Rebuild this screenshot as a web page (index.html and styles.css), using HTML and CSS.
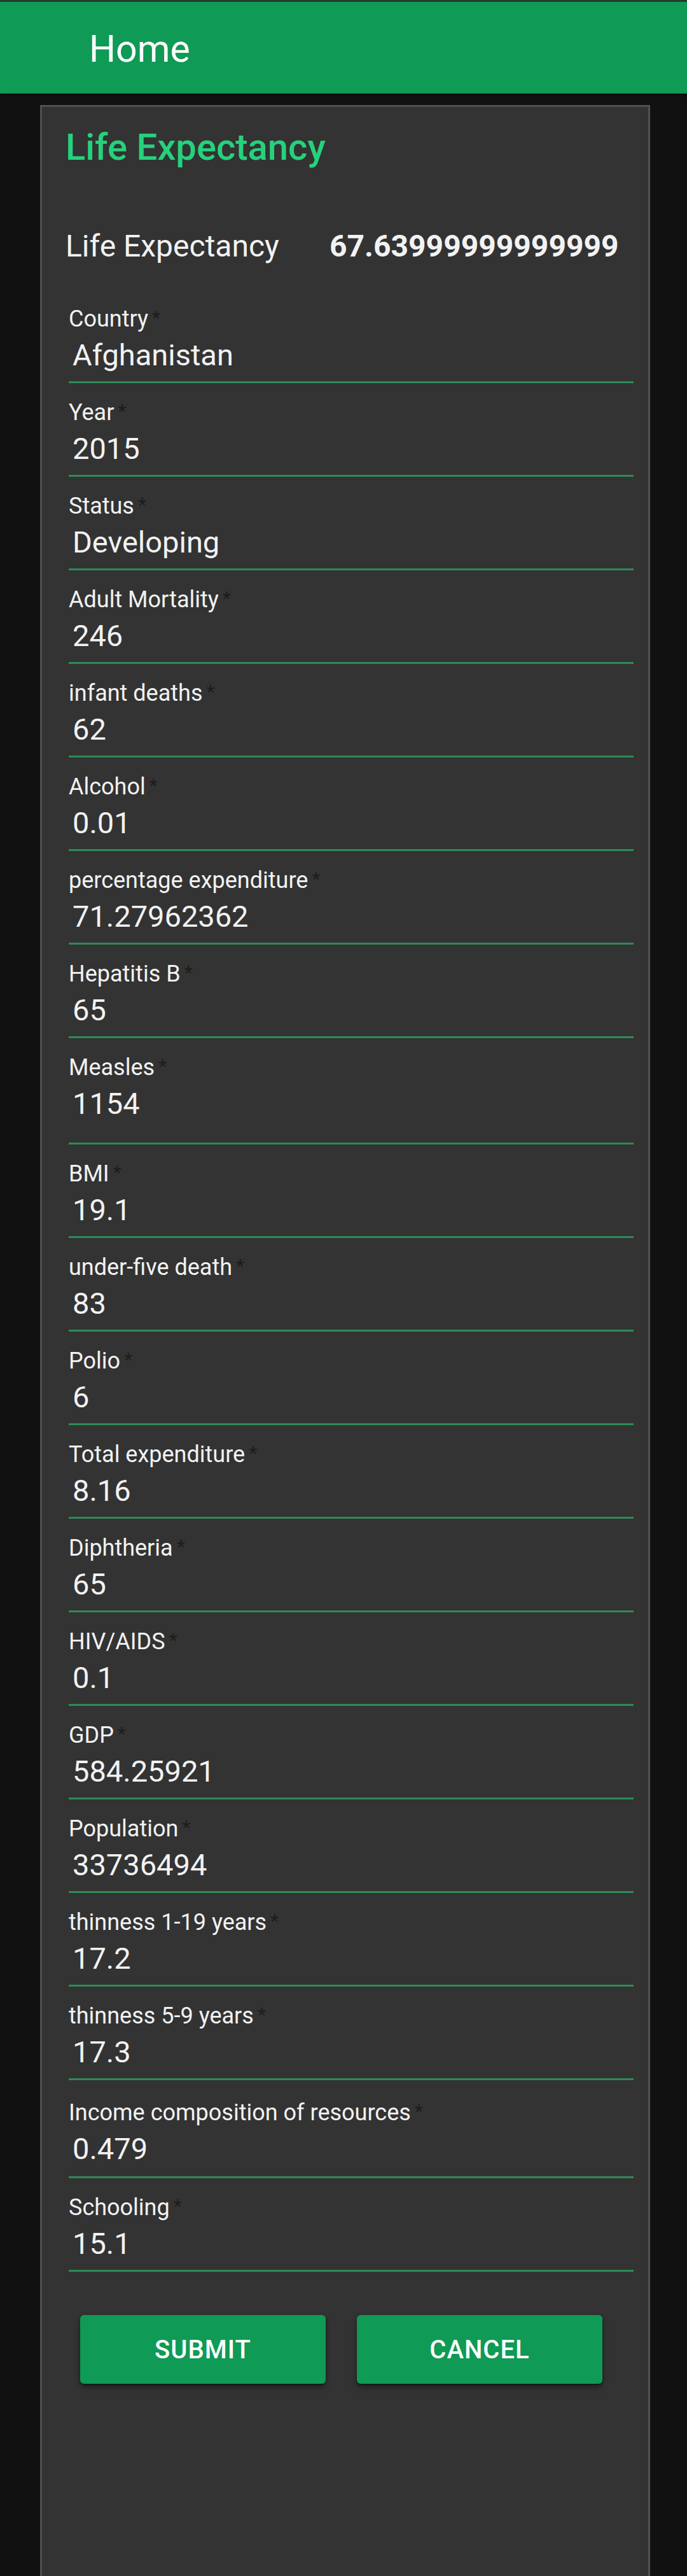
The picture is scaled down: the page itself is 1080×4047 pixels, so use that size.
FILE: index.html
```html
<!DOCTYPE html>
<html lang="en">
<head>
<meta charset="utf-8">
<title>Home</title>
<link rel="stylesheet" href="styles.css">
</head>
<body>
<header class="appbar"><div class="appbar-title">Home</div></header>
<main class="card">
  <h1 class="card-title">Life Expectancy</h1>
  <div class="result">
    <span class="result-label">Life Expectancy</span>
    <span class="result-value">67.63999999999999</span>
  </div>
  <form class="form">
    <div class="field"><label class="field-label">Country<span class="req">&thinsp;*</span></label><div class="field-value">Afghanistan</div></div>
    <div class="field"><label class="field-label">Year<span class="req">&thinsp;*</span></label><div class="field-value">2015</div></div>
    <div class="field"><label class="field-label">Status<span class="req">&thinsp;*</span></label><div class="field-value">Developing</div></div>
    <div class="field"><label class="field-label">Adult Mortality<span class="req">&thinsp;*</span></label><div class="field-value">246</div></div>
    <div class="field"><label class="field-label">infant deaths<span class="req">&thinsp;*</span></label><div class="field-value">62</div></div>
    <div class="field"><label class="field-label">Alcohol<span class="req">&thinsp;*</span></label><div class="field-value">0.01</div></div>
    <div class="field"><label class="field-label">percentage expenditure<span class="req">&thinsp;*</span></label><div class="field-value">71.27962362</div></div>
    <div class="field"><label class="field-label">Hepatitis B<span class="req">&thinsp;*</span></label><div class="field-value">65</div></div>
    <div class="field field-tall"><label class="field-label">Measles<span class="req">&thinsp;*</span></label><div class="field-value">1154</div></div>
    <div class="field"><label class="field-label">BMI<span class="req">&thinsp;*</span></label><div class="field-value">19.1</div></div>
    <div class="field"><label class="field-label">under-five death<span class="req">&thinsp;*</span></label><div class="field-value">83</div></div>
    <div class="field"><label class="field-label">Polio<span class="req">&thinsp;*</span></label><div class="field-value">6</div></div>
    <div class="field"><label class="field-label">Total expenditure<span class="req">&thinsp;*</span></label><div class="field-value">8.16</div></div>
    <div class="field"><label class="field-label">Diphtheria<span class="req">&thinsp;*</span></label><div class="field-value">65</div></div>
    <div class="field"><label class="field-label">HIV/AIDS<span class="req">&thinsp;*</span></label><div class="field-value">0.1</div></div>
    <div class="field"><label class="field-label">GDP<span class="req">&thinsp;*</span></label><div class="field-value">584.25921</div></div>
    <div class="field"><label class="field-label">Population<span class="req">&thinsp;*</span></label><div class="field-value">33736494</div></div>
    <div class="field"><label class="field-label">thinness 1-19 years<span class="req">&thinsp;*</span></label><div class="field-value">17.2</div></div>
    <div class="field"><label class="field-label">thinness 5-9 years<span class="req">&thinsp;*</span></label><div class="field-value">17.3</div></div>
    <div class="field field-income"><label class="field-label">Income composition of resources<span class="req">&thinsp;*</span></label><div class="field-value">0.479</div></div>
    <div class="field"><label class="field-label">Schooling<span class="req">&thinsp;*</span></label><div class="field-value">15.1</div></div>
    <div class="actions">
      <button type="button" class="btn">Submit</button>
      <button type="button" class="btn">Cancel</button>
    </div>
  </form>
</main>
</body>
</html>
```
FILE: styles.css
```css
* { box-sizing: border-box; }
html, body { margin: 0; padding: 0; }
body {
  background: #111111;
  font-family: Roboto, "Liberation Sans", Arial, sans-serif;
  color: #f2f2f2;
  min-height: 100vh;
}
.appbar {
  height: 147px;
  background: #0f9a55;
  border-top: 3px solid #28392f;
  box-shadow: 0 2px 4px rgba(0,0,0,0.5);
  padding-top: 40px;
  padding-left: 140px;
}
.appbar-title {
  font-size: 59px;
  line-height: 68px;
  color: #ffffff;
  font-weight: 400;
}
.card {
  display: block;
  margin: 18px 0 0 63px;
  width: 959px;
  min-height: calc(100vh - 165px);
  background: #333333;
  border: 3px solid #505050;
  border-bottom: none;
  padding: 30px 0 40px 37px;
}
.card-title {
  margin: 0;
  font-size: 58px;
  line-height: 66px;
  font-weight: 500;
  color: #25d27c;
}
.result {
  display: flex;
  margin-top: 95px;
  line-height: 56px;
  height: 56px;
}
.result-label {
  width: 415px;
  font-size: 48px;
  color: #f2f2f2;
}
.result-value {
  font-size: 48px;
  font-weight: 700;
  color: #f2f2f2;
}
.form {
  margin: 40px 0 0 5px;
  width: 888px;
}
.field {
  padding-top: 25px;
  border-bottom: 3px solid #2e8b57;
}
.field-income { padding-top: 30px; }
.field-label {
  display: block;
  height: 42px;
  font-size: 36px;
  line-height: 42px;
  color: #f2f2f2;
  white-space: nowrap;
}
.req {
  color: #1c1c1c;
  font-size: 30px;
  line-height: 0;
  vertical-align: 4px;
}
.field-value {
  margin-top: 8px;
  height: 69px;
  padding: 0 0 13px 6px;
  font-size: 47px;
  line-height: 56px;
  color: #f2f2f2;
}
.field-tall .field-value { height: 89px; }
.field-income .field-value { height: 71px; }
.actions {
  display: flex;
  gap: 49px;
  margin: 68px 0 0 18px;
}
.btn {
  width: 386px;
  height: 108px;
  border: none;
  border-radius: 6px;
  background: #0f9a55;
  color: #ffffff;
  font-family: Roboto, "Liberation Sans", Arial, sans-serif;
  font-size: 40px;
  font-weight: 500;
  letter-spacing: 1px;
  text-transform: uppercase;
  box-shadow: 0 3px 1px -2px rgba(0,0,0,0.2), 0 2px 2px 0 rgba(0,0,0,0.14), 0 1px 5px 0 rgba(0,0,0,0.12), 0 6px 10px rgba(0,0,0,0.35);
}
```
